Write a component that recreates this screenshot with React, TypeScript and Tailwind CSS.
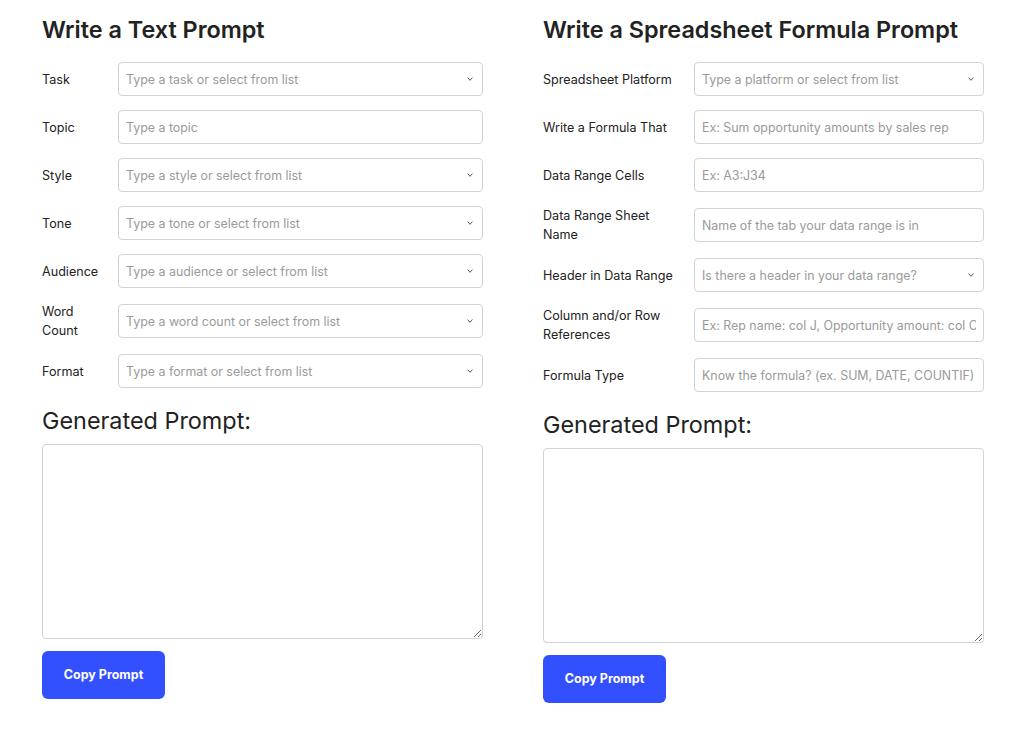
import React from "react";

type Field = {
  label: string;
  placeholder: string;
  select?: boolean;
};

const textFields: Field[] = [
  { label: "Task", placeholder: "Type a task or select from list", select: true },
  { label: "Topic", placeholder: "Type a topic" },
  { label: "Style", placeholder: "Type a style or select from list", select: true },
  { label: "Tone", placeholder: "Type a tone or select from list", select: true },
  { label: "Audience", placeholder: "Type a audience or select from list", select: true },
  { label: "Word Count", placeholder: "Type a word count or select from list", select: true },
  { label: "Format", placeholder: "Type a format or select from list", select: true },
];

const sheetFields: Field[] = [
  { label: "Spreadsheet Platform", placeholder: "Type a platform or select from list", select: true },
  { label: "Write a Formula That", placeholder: "Ex: Sum opportunity amounts by sales rep" },
  { label: "Data Range Cells", placeholder: "Ex: A3:J34" },
  { label: "Data Range Sheet Name", placeholder: "Name of the tab your data range is in" },
  { label: "Header in Data Range", placeholder: "Is there a header in your data range?", select: true },
  { label: "Column and/or Row References", placeholder: "Ex: Rep name: col J, Opportunity amount: col C" },
  { label: "Formula Type", placeholder: "Know the formula? (ex. SUM, DATE, COUNTIF)" },
];

function Chevron() {
  return (
    <svg width="6" height="4" viewBox="0 0 6 4" className="pointer-events-none absolute right-[10px] top-1/2 -translate-y-1/2">
      <path d="M0.6 0.6 L3 3.3 L5.4 0.6" fill="none" stroke="#555" strokeWidth="1" />
    </svg>
  );
}

function Row({ field, labelWidth }: { field: Field; labelWidth: string }) {
  return (
    <div className="flex min-h-[34px] items-center">
      <label className={`${labelWidth} shrink-0 pr-2 text-[12.6px] leading-[19px] text-[#222]`}>{field.label}</label>
      <div className="relative flex-1">
        <input
          type="text"
          placeholder={field.placeholder}
          className="block h-[34px] w-full rounded-[4px] border border-[#d3d3d3] bg-white px-[7px] text-[12.4px] text-[#222] placeholder:text-[#9a9a9a] outline-none"
        />
        {field.select ? <Chevron /> : null}
      </div>
    </div>
  );
}

function PromptForm({ title, fields, labelWidth }: { title: string; fields: Field[]; labelWidth: string }) {
  return (
    <div className="flex flex-col">
      <h2 className="text-[23.4px] font-semibold leading-8 text-[#222]">{title}</h2>
      <div className="mt-4 flex flex-col gap-[14px]">
        {fields.map((f) => (
          <Row key={f.label} field={f} labelWidth={labelWidth} />
        ))}
      </div>
      <h3 className="mt-[17px] text-[23.4px] font-normal leading-8 text-[#222]">Generated Prompt:</h3>
      <textarea className="mt-[7px] block h-[195px] w-full rounded-[4px] border border-[#d3d3d3] bg-white p-2 text-[13px] outline-none" />
      <div className="mt-3">
        <button className="h-12 w-[123px] rounded-[6px] bg-[#3350ff] text-[12.5px] font-bold text-white">Copy Prompt</button>
      </div>
    </div>
  );
}

export default function App() {
  return (
    <div className="min-h-[730px] bg-white pt-[14px] font-['Inter','Liberation_Sans',sans-serif]">
      <div className="ml-[42px] grid w-[942px] grid-cols-2 gap-[60px]">
        <PromptForm title="Write a Text Prompt" fields={textFields} labelWidth="w-[76px]" />
        <PromptForm title="Write a Spreadsheet Formula Prompt" fields={sheetFields} labelWidth="w-[151px]" />
      </div>
    </div>
  );
}
